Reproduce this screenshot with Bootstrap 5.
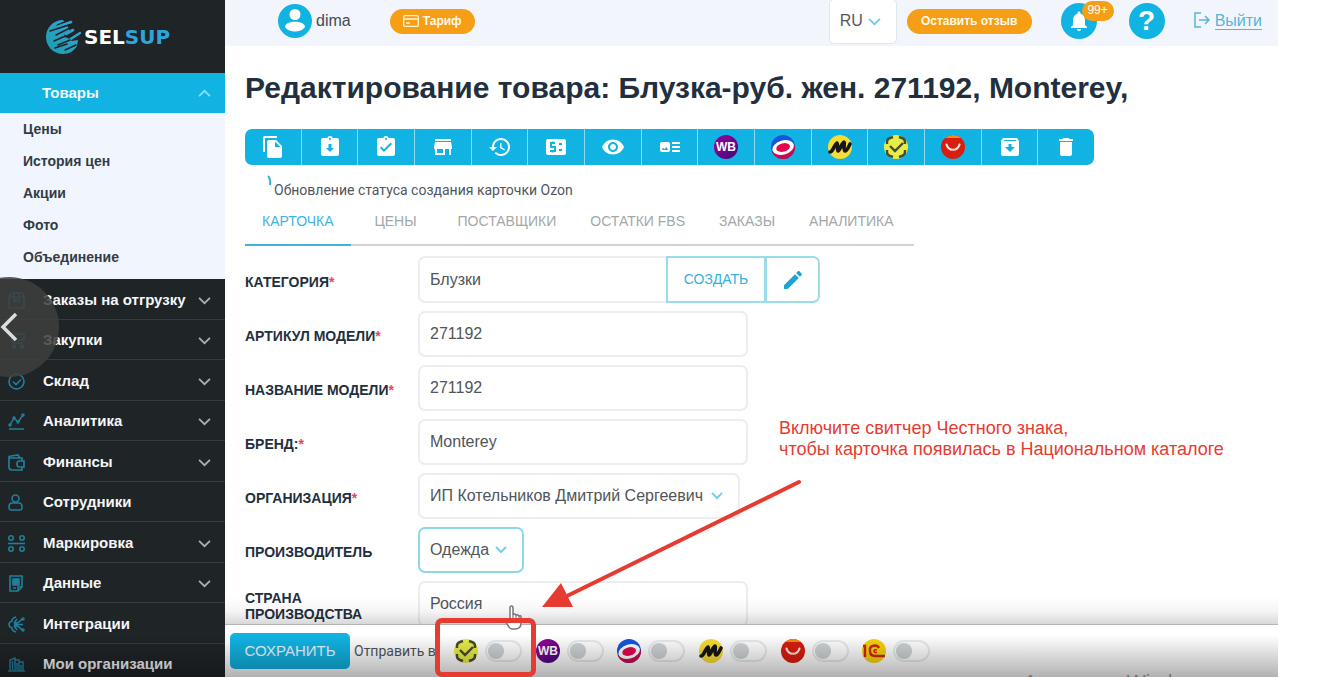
<!DOCTYPE html>
<html lang="ru">
<head>
<meta charset="utf-8">
<meta name="viewport" content="width=device-width, initial-scale=1">
<title>SelSup — Редактирование товара</title>
<link href="https://cdn.jsdelivr.net/npm/bootstrap@5.3.0/dist/css/bootstrap.min.css" rel="stylesheet">
<style>
  :root { --cyan: #11b3e3; --orange: #f59e16; --ink: #222f3e; --red: #e63b30; }
  body { font-family: "Liberation Sans", Arial, sans-serif; background: #fff; }
  svg { display: block; flex: none; }
  .app-shell { margin-right: 48px; }

  /* sidebar */
  .side-menu { width: 225px; background: #1f2427; }
  .brand-box { height: 73px; padding-left: 45px; gap: 3px; font: bold 20px "DejaVu Sans", sans-serif; color: #fff; }
  .brand-box span { color: #2ea3dc; }
  .side-link { height: 40px; padding: 0 14px 0 8px; color: #f4f6f8; font-size: 15px; font-weight: 700; text-decoration: none; }
  .side-link .side-text { margin-left: 18px; }
  .side-link .side-icon { color: #217f9c; }
  .side-link .side-arrow { color: #aab0b4; }
  .side-link.current { background: var(--cyan); padding-left: 42px; }
  .side-link.current .side-arrow { color: #8edcf4; }
  .side-list li { border-bottom: 1px solid #363b3f; }
  .side-list .side-link { height: 40px; padding-top: 2px; }
  .side-list li:nth-child(even) .side-link { height: 39px; }
  .sub-menu { background: #f1f5fd; padding-bottom: 6px; }
  .sub-menu a { height: 32px; padding-left: 23px; color: #323c48; font-size: 14px; font-weight: 700; text-decoration: none; }

  /* header */
  .top-bar { height: 46px; background: #f2f5fb; padding: 0 16px 4px 53px; color: #444c55; }
  .pill-btn { height: 25px; border-radius: 13px; background: var(--orange); color: #fffbe8; border: 0; font-size: 12px; font-weight: 700; padding: 0 13px; white-space: nowrap; }
  .plan-btn { margin-left: 39px; }
  .lang-box { width: 68px; height: 45px; border: 1px solid #e1e6e9; border-radius: 5px; color: #55595e; padding: 0 15px 0 10px; font-size: 16px; margin-right: 10px; }
  .review-btn { width: 125px; }
  .round-btn { width: 36px; height: 36px; border: 0; border-radius: 50%; background: var(--cyan); color: #fff; padding: 0; }
  .bell-box { margin: 0 32px 0 29px; }
  .help-btn { font-size: 28px; line-height: 36px; margin-right: 29px; }
  .count-badge { position: absolute; left: 21px; top: -2px; width: 32px; height: 20px; border-radius: 10px; background: var(--orange); font-size: 12px; line-height: 19px; }
  .exit-link { color: #55b5dc; font-size: 16px; text-decoration: none; gap: 5px; }
  .exit-link span { border-bottom: 1px solid; line-height: 17px; }

  /* content */
  .page-body { padding: 24px 20px 0; }
  .page-body h1 { font-size: 30px; line-height: 36px; font-weight: 700; color: var(--ink); margin-bottom: 23px; }
  .tool-row { width: 849px; height: 36px; }
  .tool-row .btn { background: var(--cyan); border: 0; border-right: 2px solid #8fdaf2; border-radius: 0; padding: 0; flex: 1 1 0; color: #fff; }
  .tool-row .btn:first-child { border-radius: 7px 0 0 7px; }
  .tool-row .btn:last-child { border-radius: 0 7px 7px 0; border-right: 0; }
  .status-note { padding: 10px 0 0 21px; height: 38px; font-size: 14px; line-height: 30px; color: #50565c; font-family: Roboto, sans-serif; }
  .tab-row { width: 669px; height: 43px; border-bottom: 2px solid #d2d3d5; }
  .tab-row .nav-link { min-width: 90px; padding: 8px 17px 0; height: 43px; text-align: center; color: #a3a7aa; font-size: 14px; line-height: 20px; white-space: nowrap; }
  .tab-row .nav-link.active { color: #42b4dc; border-bottom: 2px solid #42b4dc; }
  .form-rows { padding-top: 10px; display: grid; gap: 8px; }
  .form-line { display: flex; align-items: center; }
  .form-line label { width: 173px; padding-top: 4px; flex: none; font-size: 14px; line-height: 16px; font-weight: 700; color: var(--ink); }
  .form-line label i { color: #e8455a; font-style: normal; }
  .field { height: 46px; width: 330px; border: 2px solid #ededf0; border-radius: 7px; color: #50555b; font-size: 16px; padding: 0 10px; background-color: #fff; }
  .category-group { width: 402px; height: 47px; }
  .category-group .field { height: 47px; border-right: 0; }
  .category-group .btn { border: 2px solid #9bdcea; color: #38b0d8; background: #fff; border-radius: 0 7px 7px 0; padding: 0; }
  .btn-create { width: 100px; font-size: 14px; }
  .btn-edit { width: 55px; }
  .select-field { background-image: url("data:image/svg+xml,%3Csvg xmlns='http://www.w3.org/2000/svg' viewBox='0 0 12 12'%3E%3Cpath d='M1 3l5 5 5-5' fill='none' stroke='%2378d0e6' stroke-width='2'/%3E%3C/svg%3E"); background-size: 12px 12px; background-position: right 15px center; background-repeat: no-repeat; appearance: none; }
  .org-select { width: 322px; }
  .maker-select { width: 106px; border-color: #8fd6e8; }

  /* bottom bar */
  .save-bar { height: 53px; background: #fff; padding-left: 5px; position: relative; border-top: 1px solid #d5d5d5; }
  .save-bar::before { content: ""; position: absolute; left: 0; right: 0; bottom: 100%; height: 28px; background: linear-gradient(rgba(0,0,0,0), rgba(0,0,0,.04) 50%, rgba(0,0,0,.16)); pointer-events: none; }
  .btn-save { width: 120px; height: 36px; background: var(--cyan); color: #e9f9ff; border: 0; border-radius: 5px; font-size: 15px; padding: 0; }
  .send-label { font-size: 14px; color: #50555b; width: 104px; padding-left: 4px; font-family: Roboto, sans-serif; }
  .market-list { display: grid; grid-template-columns: repeat(6, 1fr); width: 490px; }
  .market-list .form-check { min-height: 0; padding: 0; margin: 0; gap: 7px; }
  .market-list .form-check-input { width: 37px; height: 22px; margin: 0; float: none; border: 2px solid #e8eaeb; background-color: rgba(255,255,255,.4); background-size: 18px 18px; background-position: left center; background-repeat: no-repeat;
    background-image: url("data:image/svg+xml,%3Csvg xmlns='http://www.w3.org/2000/svg' viewBox='-4 -4 8 8'%3E%3Ccircle r='3.6' fill='%23cdd2d5'/%3E%3C/svg%3E"); }
  .player-shade { position: absolute; left: 0; right: 0; bottom: 0; height: 42px; background: linear-gradient(rgba(0,0,0,0), rgba(0,0,0,.3)); pointer-events: none; }
  .os-watermark { position: absolute; right: 70px; bottom: -17px; font-size: 20px; line-height: 24px; color: #a2a2a2; }

  /* annotations laid over the page */
  .prev-btn { position: absolute; left: -41px; top: 277px; width: 100px; height: 100px; border: 0; border-radius: 50%; background: rgba(62,62,62,.85); padding: 0 0 0 40px; }
  .note-text { position: absolute; left: 779px; top: 418px; font-size: 18px; line-height: 21px; color: var(--red); white-space: nowrap; }
  .note-arrow { position: absolute; left: 540px; top: 476px; }
  .note-frame { position: absolute; left: 435px; bottom: 0; width: 101px; height: 59px; border: 5px solid var(--red); border-radius: 7px; pointer-events: none; }
  .hand-cursor { position: absolute; left: 503px; top: 605px; }
</style>
</head>
<body>
<svg width="0" height="0" class="position-absolute" aria-hidden="true">
  <defs>
    <linearGradient id="wbFill" x1="0" y1="0" x2="1" y2="1"><stop offset="0" stop-color="#a3009c"/><stop offset="1" stop-color="#3b0a78"/></linearGradient>
    <linearGradient id="logoFill" gradientUnits="userSpaceOnUse" x1="34" y1="0" x2="0" y2="36"><stop offset="0" stop-color="#35a6dc"/><stop offset="1" stop-color="#1b9cab"/></linearGradient>
    <clipPath id="disc"><circle cx="12" cy="12" r="12"/></clipPath>
  </defs>
  <symbol id="m-ozon" viewBox="0 0 24 24"><g clip-path="url(#disc)"><rect width="24" height="24" fill="#1557dc"/><path d="M0 17L24 10V24H0Z" fill="#d2064e"/><ellipse cx="12" cy="12.500" rx="11" ry="7" fill="#fff" transform="rotate(-17 12 12)"/><ellipse cx="12" cy="12.500" rx="7" ry="4.200" fill="#e4064f" transform="rotate(-14 12 12)"/></g></symbol>
  <symbol id="m-market" viewBox="0 0 24 24"><circle cx="12" cy="12" r="12" fill="#f7dc35"/><path d="M2 17C5 17 6 10 9 8c1 0 0 6 1 8 2 0 3-7 6-9 1 0-1 8 1 9 2 0 3-3 5-7" fill="none" stroke="#161616" stroke-width="3.600" stroke-linecap="round" stroke-linejoin="round"/></symbol>
  <symbol id="m-chz" viewBox="0 0 24 24"><circle cx="12" cy="12" r="12" fill="#e6ee45"/><path d="M3 9V7q0-3 3-4l3-1M15 2l3 1q3 1 3 4v2M21 15v2q0 3-3 4l-3 1M9 22l-3-1q-3-1-3-4v-2M6 11l5 5 8-8" fill="none" stroke="#4a4a35" stroke-width="2.400"/></symbol>
  <symbol id="m-ali" viewBox="0 0 24 24"><g clip-path="url(#disc)"><rect width="24" height="24" fill="#d81e0e"/><path d="M0 0h24v3H0Z" fill="#f58a12"/></g><path d="M5.500 9.500c2 7 11 7 13 0" fill="none" stroke="#ffe3dc" stroke-width="2.200" stroke-linecap="round"/></symbol>
  <symbol id="m-1c" viewBox="0 0 24 24"><circle cx="12" cy="12" r="12" fill="#f6d40c"/><path d="M1 7h2v11M17 9c-2-4-10-3-9 3 0 3 2 5 5 5h10" fill="none" stroke="#d3240f" stroke-width="2.400"/><path d="M15 11q-3-1-3 1t3 1.500" fill="none" stroke="#d3240f" stroke-width="1.500"/></symbol>
  <symbol id="i-down" viewBox="0 0 12 12"><path d="M1 3.500l5 5 5-5" fill="none" stroke="currentColor" stroke-width="1.600"/></symbol>
  <symbol id="i-up" viewBox="0 0 12 12"><path d="M1 8.500l5-5 5 5" fill="none" stroke="currentColor" stroke-width="1.600"/></symbol>
</svg>

<div class="app-shell d-flex vh-100 position-relative overflow-hidden">
  <aside class="side-menu flex-shrink-0 overflow-hidden">
    <div class="brand-box d-flex align-items-center">
      <svg width="36" height="38" viewBox="0 0 36 38" fill="none" stroke-linecap="round">
        <path d="M18 2C8 2 1 10 1 19s7 17 17 17c6 0 11-3 14-8l1-6-6 1-6-4 4-6-3-6z" fill="url(#logoFill)"/>
        <path d="M14 8L27 3M22 17L34 10" stroke="#1f2427" stroke-width="5"/>
        <path d="M12 9L26 4M21 16L28 12M24 22l11-7" stroke="url(#logoFill)" stroke-width="2.600"/>
        <path d="M5 13L24 7M11 17L25 10M9 23l9-4 8-2M13 27l12-5M10 30l12-4M20 32l11-5" stroke="#1f2427" stroke-width="1.500"/>
      </svg>
      <div>SEL<span>SUP</span></div>
    </div>
    <a href="#" class="side-link current d-flex align-items-center justify-content-between"><span>Товары</span><svg class="side-arrow" width="13" height="13"><use href="#i-up"/></svg></a>
    <nav class="sub-menu d-flex flex-column">
      <a href="#" class="d-flex align-items-center">Цены</a>
      <a href="#" class="d-flex align-items-center">История цен</a>
      <a href="#" class="d-flex align-items-center">Акции</a>
      <a href="#" class="d-flex align-items-center">Фото</a>
      <a href="#" class="d-flex align-items-center">Объединение</a>
    </nav>
    <ul class="side-list list-unstyled mb-0">
      <li><a href="#" class="side-link d-flex align-items-center"><svg class="side-icon" width="17" height="17" viewBox="0 0 17 17" fill="none" stroke="currentColor" stroke-width="1.500"><path d="M1 5l2-4h11l2 4v11H1zM1 5h15M6 1v9l2.500-2 2.500 2V1"/></svg><span class="side-text flex-grow-1">Заказы на отгрузку</span><svg class="side-arrow" width="13" height="13"><use href="#i-down"/></svg></a></li>
      <li><a href="#" class="side-link d-flex align-items-center"><svg class="side-icon" width="17" height="17" viewBox="0 0 17 17" fill="none" stroke="currentColor" stroke-width="1.500"><path d="M0 1h3l2 10h10M6 2h10v6H5"/><circle cx="6" cy="14.500" r="1.500"/><circle cx="14" cy="14.500" r="1.500"/></svg><span class="side-text flex-grow-1">Закупки</span><svg class="side-arrow" width="13" height="13"><use href="#i-down"/></svg></a></li>
      <li><a href="#" class="side-link d-flex align-items-center"><svg class="side-icon" width="17" height="17" viewBox="0 0 17 17" fill="none" stroke="currentColor" stroke-width="1.600"><circle cx="8.500" cy="8.500" r="7.500"/><path d="M5 8.500l3 3 5-5"/></svg><span class="side-text flex-grow-1">Склад</span><svg class="side-arrow" width="13" height="13"><use href="#i-down"/></svg></a></li>
      <li><a href="#" class="side-link d-flex align-items-center"><svg class="side-icon" width="17" height="17" viewBox="0 0 17 17" fill="none" stroke="currentColor" stroke-width="1.500"><path d="M1 16h15M2 12l4-7 4 4 5-7"/><circle cx="2" cy="12" r="1"/><circle cx="6" cy="5" r="1"/><circle cx="10" cy="9" r="1"/><circle cx="15" cy="2" r="1"/></svg><span class="side-text flex-grow-1">Аналитика</span><svg class="side-arrow" width="13" height="13"><use href="#i-down"/></svg></a></li>
      <li><a href="#" class="side-link d-flex align-items-center"><svg class="side-icon" width="17" height="17" viewBox="0 0 17 17" fill="none" stroke="currentColor" stroke-width="1.700"><path d="M14 7V4H3q-2 0-2-1v10q0 3 3 3h10v-3M1 3q0-1 2-1l7-1 2 3M16 7h-5q-2 0-2 3t2 3h5z"/></svg><span class="side-text flex-grow-1">Финансы</span><svg class="side-arrow" width="13" height="13"><use href="#i-down"/></svg></a></li>
      <li><a href="#" class="side-link d-flex align-items-center"><svg class="side-icon" width="17" height="17" viewBox="0 0 17 17" fill="none" stroke="currentColor" stroke-width="1.600"><circle cx="7.500" cy="4.500" r="3.500"/><path d="M4 9q-3 0-3 4 0 3 2 3h9q2 0 2-3 0-4-3-4z"/></svg><span class="side-text flex-grow-1">Сотрудники</span></a></li>
      <li><a href="#" class="side-link d-flex align-items-center"><svg class="side-icon" width="17" height="17" viewBox="0 0 17 17" fill="none" stroke="currentColor" stroke-width="1.600"><path d="M0 8.500h17"/><circle cx="3" cy="3" r="2.200"/><circle cx="14" cy="3" r="2.200"/><circle cx="3" cy="14" r="2.200"/><circle cx="14" cy="14" r="2.200"/></svg><span class="side-text flex-grow-1">Маркировка</span><svg class="side-arrow" width="13" height="13"><use href="#i-down"/></svg></a></li>
      <li><a href="#" class="side-link d-flex align-items-center"><svg class="side-icon" width="17" height="17" viewBox="0 0 17 17" fill="none" stroke="currentColor" stroke-width="1.600"><path d="M2 1h12v11l-4 4H2z"/><path d="M5 4h6v6H5z" fill="currentColor"/><path d="M10 16v-4h4M5 13h3"/></svg><span class="side-text flex-grow-1">Данные</span><svg class="side-arrow" width="13" height="13"><use href="#i-down"/></svg></a></li>
      <li><a href="#" class="side-link d-flex align-items-center"><svg class="side-icon" width="17" height="17" viewBox="0 0 17 17" fill="none" stroke="currentColor" stroke-width="1.500"><path d="M8 1Q4 2 4 5 1 6 1 8.500T4 12q0 3 4 4M6 8.500h9M6 8l5-2 3-3M6 9l5 2 3 3M6 7l3-4M6 10l3 4"/><circle cx="15" cy="3" r="1"/><circle cx="15" cy="14" r="1"/></svg><span class="side-text flex-grow-1">Интеграции</span></a></li>
      <li><a href="#" class="side-link d-flex align-items-center"><svg class="side-icon" width="17" height="17" viewBox="0 0 17 17" fill="none" stroke="currentColor" stroke-width="1.500"><path d="M0 15h17M2 15V4l5-2v13M4.500 5v9M7 4h4v11M9 7v7M11 6h4v9M13 9v6"/></svg><span class="side-text flex-grow-1">Мои организации</span></a></li>
    </ul>
  </aside>

  <div class="d-flex flex-column flex-grow-1 overflow-hidden">
    <header class="top-bar d-flex align-items-center flex-shrink-0">
      <svg width="34" height="34" viewBox="0 0 34 34"><circle cx="17" cy="17" r="17" fill="#11b3e3"/><circle cx="17" cy="10.500" r="5.500" fill="#fff"/><path d="M7 23c0-7 20-7 20 0-4 6-16 6-20 0z" fill="#fff"/></svg>
      <span class="ms-1">dima</span>
      <button type="button" class="pill-btn plan-btn d-flex align-items-center gap-1"><svg width="16" height="12" viewBox="0 0 16 12" fill="none" stroke="#fff3cf" stroke-width="1.300"><rect x=".7" y=".7" width="14.600" height="10.600" rx="1"/><path d="M1 4h14M3 8h4"/></svg>Тариф</button>
      <div class="d-flex align-items-center flex-shrink-0 ms-auto">
        <button type="button" class="lang-box bg-white d-flex align-items-center justify-content-between">RU<svg width="13" height="13" color="#6fcbe6"><use href="#i-down"/></svg></button>
        <button type="button" class="pill-btn review-btn">Оставить отзыв</button>
        <div class="position-relative bell-box"><button type="button" class="round-btn d-flex align-items-center justify-content-center" aria-label="Уведомления"><svg width="24" height="24" viewBox="0 0 24 24" fill="currentColor"><path d="M12 22c1.100 0 2-.9 2-2h-4c0 1.100.89 2 2 2zm6-6v-5c0-3.070-1.640-5.640-4.500-6.320V4c0-.83-.67-1.500-1.500-1.500s-1.500.67-1.500 1.500v.68C7.630 5.360 6 7.920 6 11v5l-2 2v1h16v-1l-2-2z"/></svg></button><span class="count-badge text-white text-center">99+</span></div>
        <button type="button" class="round-btn help-btn fw-bold">?</button>
        <a href="#" class="exit-link d-flex align-items-center"><svg width="16" height="18" viewBox="0 0 16 18" fill="none" stroke="currentColor" stroke-width="1.500"><path d="M7 1H1v14h6M5 8h10M11 4l4 4-4 4"/></svg><span>Выйти</span></a>
      </div>
    </header>

    <main class="page-body flex-grow-1 overflow-hidden">
      <h1 class="text-nowrap">Редактирование товара: Блузка-руб. жен. 271192, Monterey,</h1>
      <div class="tool-row btn-group d-flex" role="toolbar" aria-label="Действия с товаром">
        <button type="button" class="btn d-flex align-items-center justify-content-center" aria-label="Копировать"><svg width="24" height="24" viewBox="0 0 24 24" fill="currentColor"><path d="M16 1H4c-1.100 0-2 .9-2 2v14h2V3h12V1zm-1 4l6 6v10c0 1.100-.9 2-2 2H7.990C6.890 23 6 22.100 6 21l.01-14c0-1.100.89-2 1.990-2h7zm-1 7h5.500L14 6.500V12z"/></svg></button>
        <button type="button" class="btn d-flex align-items-center justify-content-center" aria-label="Загрузить"><svg width="24" height="24" viewBox="0 0 24 24" fill="currentColor"><path d="M19 3h-4.180C14.400 1.840 13.300 1 12 1c-1.300 0-2.400.84-2.820 2H5c-1.100 0-2 .9-2 2v14c0 1.100.9 2 2 2h14c1.100 0 2-.9 2-2V5c0-1.100-.9-2-2-2zm-7 0c.55 0 1 .45 1 1s-.45 1-1 1-1-.45-1-1 .45-1 1-1zm0 14l-4-4h2.500V9h3v4H16z"/></svg></button>
        <button type="button" class="btn d-flex align-items-center justify-content-center" aria-label="Проверить"><svg width="24" height="24" viewBox="0 0 24 24" fill="currentColor"><path d="M19 3h-4.180C14.400 1.840 13.300 1 12 1c-1.300 0-2.400.84-2.820 2H5c-1.100 0-2 .9-2 2v14c0 1.100.9 2 2 2h14c1.100 0 2-.9 2-2V5c0-1.100-.9-2-2-2zm-7 0c.55 0 1 .45 1 1s-.45 1-1 1-1-.45-1-1 .45-1 1-1zm-2 14l-4-4 1.410-1.410L10 14.170l6.590-6.590L18 9l-8 8z"/></svg></button>
        <button type="button" class="btn d-flex align-items-center justify-content-center" aria-label="Магазин"><svg width="24" height="24" viewBox="0 0 24 24" fill="currentColor"><path d="M20 4H4v2h16V4zm1 10v-2l-1-5H4l-1 5v2h1v6h10v-6h4v6h2v-6h1zm-9 4H6v-4h6v4z"/></svg></button>
        <button type="button" class="btn d-flex align-items-center justify-content-center" aria-label="История"><svg width="24" height="24" viewBox="0 0 24 24" fill="currentColor"><path d="M13 3c-4.970 0-9 4.030-9 9H1l3.890 3.890.07.14L9 12H6c0-3.870 3.130-7 7-7s7 3.130 7 7-3.130 7-7 7c-1.930 0-3.680-.79-4.940-2.060l-1.420 1.420C8.270 19.990 10.510 21 13 21c4.970 0 9-4.030 9-9s-4.030-9-9-9zm-1 5v5l4.280 2.540.72-1.210-3.500-2.080V8H12z"/></svg></button>
        <button type="button" class="btn d-flex align-items-center justify-content-center" aria-label="Цена"><svg width="24" height="24" viewBox="0 0 24 24"><rect x="2" y="4" width="20" height="16" rx="2" fill="#fff"/><path d="M11 8H7v4h4v4H6M8.500 6.500V8m0 8v1.500" fill="none" stroke="#11b3e3" stroke-width="2"/><path d="M15 8h3v2h-3zM15 14h3v2h-3z" fill="#11b3e3"/></svg></button>
        <button type="button" class="btn d-flex align-items-center justify-content-center" aria-label="Просмотр"><svg width="24" height="24" viewBox="0 0 24 24" fill="currentColor"><path d="M12 4.500C7 4.500 2.730 7.610 1 12c1.730 4.390 6 7.500 11 7.500s9.270-3.110 11-7.500c-1.730-4.390-6-7.500-11-7.500zM12 17c-2.760 0-5-2.240-5-5s2.240-5 5-5 5 2.240 5 5-2.240 5-5 5zm0-8c-1.660 0-3 1.340-3 3s1.340 3 3 3 3-1.340 3-3-1.340-3-3-3z"/></svg></button>
        <button type="button" class="btn d-flex align-items-center justify-content-center" aria-label="Описание"><svg width="24" height="24" viewBox="0 0 24 24" fill="currentColor"><path d="M22 13h-8v-2h8v2zm0-6h-8v2h8V7zm-8 10h8v-2h-8v2zm-2-8v6c0 1.100-.9 2-2 2H4c-1.100 0-2-.9-2-2V9c0-1.100.9-2 2-2h6c1.100 0 2 .9 2 2zm-1.500 6l-2.250-3-1.750 2.260-1.250-1.510L3.500 15h7z"/></svg></button>
        <button type="button" class="btn d-flex align-items-center justify-content-center" aria-label="Wildberries"><svg width="24" height="24" viewBox="0 0 24 24"><circle cx="12" cy="12" r="12" fill="url(#wbFill)"/><text x="12" y="16" text-anchor="middle" font-size="12" font-weight="700" fill="#fff">WB</text></svg></button>
        <button type="button" class="btn d-flex align-items-center justify-content-center" aria-label="Ozon"><svg width="24" height="24"><use href="#m-ozon"/></svg></button>
        <button type="button" class="btn d-flex align-items-center justify-content-center" aria-label="Яндекс Маркет"><svg width="24" height="24"><use href="#m-market"/></svg></button>
        <button type="button" class="btn d-flex align-items-center justify-content-center" aria-label="Честный знак"><svg width="24" height="24"><use href="#m-chz"/></svg></button>
        <button type="button" class="btn d-flex align-items-center justify-content-center" aria-label="AliExpress"><svg width="24" height="24"><use href="#m-ali"/></svg></button>
        <button type="button" class="btn d-flex align-items-center justify-content-center" aria-label="Архив"><svg width="24" height="24" viewBox="0 0 24 24"><path d="M5 3h14l2 3v13q0 2-2 2H5q-2 0-2-2V6z" fill="#fff"/><path d="M6 5.500h12" stroke="#11b3e3"/><path d="M10.500 9h3v3H17l-5 5-5-5h3.500z" fill="#11b3e3"/></svg></button>
        <button type="button" class="btn d-flex align-items-center justify-content-center" aria-label="Удалить"><svg width="24" height="24" viewBox="0 0 24 24" fill="currentColor"><path d="M6 19c0 1.100.9 2 2 2h8c1.100 0 2-.9 2-2V7H6v12zM19 4h-3.500l-1-1h-5l-1 1H5v2h14V4z"/></svg></button>
      </div>
      <div class="status-note d-flex"><svg width="8" height="12" viewBox="0 0 8 12"><path d="M2 1q3 3 2 9" fill="none" stroke="#35afd6" stroke-width="2"/></svg><span>Обновление статуса создания карточки Ozon</span></div>
      <nav class="tab-row nav flex-nowrap">
        <a href="#" class="nav-link active">КАРТОЧКА</a>
        <a href="#" class="nav-link">ЦЕНЫ</a>
        <a href="#" class="nav-link">ПОСТАВЩИКИ</a>
        <a href="#" class="nav-link">ОСТАТКИ FBS</a>
        <a href="#" class="nav-link">ЗАКАЗЫ</a>
        <a href="#" class="nav-link">АНАЛИТИКА</a>
      </nav>
      <form class="form-rows">
        <div class="form-line"><label for="category">КАТЕГОРИЯ<i>*</i></label>
          <div class="category-group input-group flex-nowrap"><input id="category" class="field form-control" value="Блузки"><button type="button" class="btn btn-create rounded-0">СОЗДАТЬ</button><button type="button" class="btn btn-edit d-flex align-items-center justify-content-center" aria-label="Изменить"><svg width="24" height="24" viewBox="0 0 24 24" fill="#1aa6d2"><path d="M3 17.250V21h3.750L17.810 9.940l-3.750-3.750L3 17.250zM20.710 7.040c.39-.39.39-1.020 0-1.410l-2.340-2.340c-.39-.39-1.020-.39-1.410 0l-1.830 1.830 3.750 3.750 1.830-1.830z"/></svg></button></div></div>
        <div class="form-line"><label for="sku">АРТИКУЛ МОДЕЛИ<i>*</i></label><input id="sku" class="field" value="271192"></div>
        <div class="form-line"><label for="model">НАЗВАНИЕ МОДЕЛИ<i>*</i></label><input id="model" class="field" value="271192"></div>
        <div class="form-line"><label for="brand">БРЕНД:<i>*</i></label><input id="brand" class="field" value="Monterey"></div>
        <div class="form-line"><label for="org">ОРГАНИЗАЦИЯ<i>*</i></label><select id="org" class="field select-field org-select"><option>ИП Котельников Дмитрий Сергеевич</option></select></div>
        <div class="form-line"><label for="maker">ПРОИЗВОДИТЕЛЬ</label><select id="maker" class="field select-field maker-select"><option>Одежда</option></select></div>
        <div class="form-line"><label for="country">СТРАНА ПРОИЗВОДСТВА</label><input id="country" class="field" value="Россия"></div>
      </form>
    </main>

    <footer class="save-bar d-flex align-items-center flex-shrink-0">
      <button type="button" class="btn-save">СОХРАНИТЬ</button>
      <span class="send-label">Отправить в</span>
      <div class="market-list">
        <div class="form-check form-switch d-flex align-items-center"><label for="s1" aria-label="Честный знак"><svg width="24" height="24"><use href="#m-chz"/></svg></label><input id="s1" type="checkbox" role="switch" class="form-check-input"></div>
        <div class="form-check form-switch d-flex align-items-center"><label for="s2" aria-label="Wildberries"><svg width="24" height="24" viewBox="0 0 24 24"><circle cx="12" cy="12" r="12" fill="url(#wbFill)"/><text x="12" y="16" text-anchor="middle" font-size="12" font-weight="700" fill="#fff">WB</text></svg></label><input id="s2" type="checkbox" role="switch" class="form-check-input"></div>
        <div class="form-check form-switch d-flex align-items-center"><label for="s3" aria-label="Ozon"><svg width="24" height="24"><use href="#m-ozon"/></svg></label><input id="s3" type="checkbox" role="switch" class="form-check-input"></div>
        <div class="form-check form-switch d-flex align-items-center"><label for="s4" aria-label="Яндекс Маркет"><svg width="24" height="24"><use href="#m-market"/></svg></label><input id="s4" type="checkbox" role="switch" class="form-check-input"></div>
        <div class="form-check form-switch d-flex align-items-center"><label for="s5" aria-label="AliExpress"><svg width="24" height="24"><use href="#m-ali"/></svg></label><input id="s5" type="checkbox" role="switch" class="form-check-input"></div>
        <div class="form-check form-switch d-flex align-items-center"><label for="s6" aria-label="1C"><svg width="24" height="24"><use href="#m-1c"/></svg></label><input id="s6" type="checkbox" role="switch" class="form-check-input"></div>
      </div>
    </footer>
  </div>

  <div class="os-watermark">Активация Windows</div>
  <div class="player-shade"></div>
  <button type="button" class="prev-btn d-flex align-items-center" aria-label="Назад"><svg width="20" height="30" viewBox="0 0 20 30"><path d="M17 2L4 15l13 13" fill="none" stroke="#dcdcdc" stroke-width="3.500"/></svg></button>
  <svg class="hand-cursor" width="20" height="26" viewBox="0 0 20 26"><path d="M7 15V3q0-2 1.500-2T10 3v7q1-2 3 0 1-1 3 1 2-1 2 1v6q0 6-6 6H9q-2 0-3-2l-4-6q0-2 2-1z" fill="#fff" stroke="#777" stroke-width="1.500"/><path d="M10 10v5M13 10v5M16 11v4" stroke="#777" stroke-width="1.200"/></svg>
  <div class="note-text">Включите свитчер Честного знака,<br>чтобы карточка появилась в Национальном каталоге</div>
  <svg class="note-arrow" width="264" height="136" viewBox="0 0 264 136"><path d="M259 6L27 120" stroke="#e63b30" stroke-width="4" stroke-linecap="round"/><path d="M2 131L21 107 33 131Z" fill="#e63b30"/></svg>
  <div class="note-frame"></div>
</div>
<script src="https://cdn.jsdelivr.net/npm/bootstrap@5.3.0/dist/js/bootstrap.bundle.min.js"></script>
</body>
</html>
